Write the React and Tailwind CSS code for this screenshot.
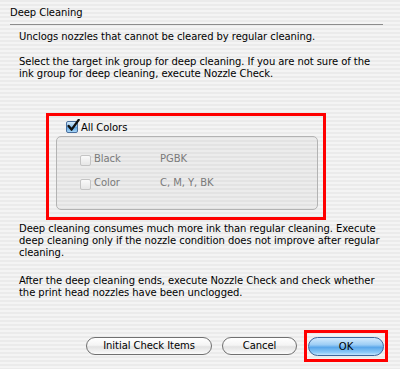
const stripes =
  'bg-[repeating-linear-gradient(to_bottom,#ebebeb_0px,#ebebeb_2px,#f4f4f4_2px,#f4f4f4_4px)]'

function AquaCheck() {
  return (
    <span className="relative flex h-[12px] w-[12px] shrink-0 items-center justify-center rounded-[2px] border border-[#4a6f9e] bg-[linear-gradient(to_bottom,#d6ebfb_0%,#8fc3ee_45%,#5ea6e4_55%,#a8d6f7_100%)]">
      <svg width="13" height="13" viewBox="0 0 12 12" className="absolute -top-[3px] left-[0px]">
        <path d="M1.5 6.5 L4.2 9.8 L10.8 0.8" fill="none" stroke="#111" strokeWidth="2.2" strokeLinecap="round" strokeLinejoin="round" />
      </svg>
    </span>
  )
}

function DimCheck() {
  return (
    <span className="mt-[2px] h-[11px] w-[11px] shrink-0 rounded-[2px] border border-[#c4c4c4] bg-[linear-gradient(to_bottom,#fafafa,#e6e6e6)]" />
  )
}

function Button({ children, className }) {
  return (
    <div
      className={
        'flex h-[18px] items-center justify-center rounded-full border border-[#707070] bg-[linear-gradient(to_bottom,#ffffff_0%,#f4f4f4_45%,#e2e2e2_55%,#fbfbfb_100%)] leading-[12px] text-black ' +
        className
      }
    >
      {children}
    </div>
  )
}

export default function App() {
  return (
    <div
      className={`h-[369px] w-[400px] overflow-hidden ${stripes} font-['DejaVu_Sans',Verdana,sans-serif] text-[10px] leading-[12px] tracking-[-0.06px] text-black`}
    >
      <div className="pl-[10px] pt-[7px]">Deep Cleaning</div>
      <div className="ml-[10px] mt-[5px] h-px w-[373px] bg-[#8c8c8c]" />

      <div className="pl-[19px]">
        <p className="mt-[6px]">Unclogs nozzles that cannot be cleared by regular cleaning.</p>
        <p className="mt-[13px] whitespace-nowrap">
          Select the target ink group for deep cleaning. If you are not sure of the
          <br />
          ink group for deep cleaning, execute Nozzle Check.
        </p>
      </div>

      <div className="ml-[46px] mt-[33px] h-[107px] w-[280px] border-[3px] border-[#ff0000]">
        <div className="ml-[17px] mt-[5px] flex items-start gap-[3px]">
          <AquaCheck />
          <span className="pt-px">All Colors</span>
        </div>
        <div className="ml-[7px] mt-[2px] h-[74px] w-[262px] rounded-[5px] border border-[#b3b3b3] bg-[#00000008] text-[#7a7a7a]">
          <div className="ml-[23px] mt-[16px] flex items-start">
            <DimCheck />
            <span className="ml-[3px] w-[66px]">Black</span>
            <span>PGBK</span>
          </div>
          <div className="ml-[23px] mt-[11px] flex items-start">
            <DimCheck />
            <span className="ml-[3px] w-[66px]">Color</span>
            <span>C, M, Y, BK</span>
          </div>
        </div>
      </div>

      <div className="whitespace-nowrap pl-[19px]">
        <p className="mt-[3px]">
          Deep cleaning consumes much more ink than regular cleaning. Execute
          <br />
          deep cleaning only if the nozzle condition does not improve after regular
          <br />
          cleaning.
        </p>
        <p className="mt-[16px]">
          After the deep cleaning ends, execute Nozzle Check and check whether
          <br />
          the print head nozzles have been unclogged.
        </p>
      </div>

      <div className="mt-[31px] flex items-center justify-end pr-[12px]">
        <Button className="w-[126px]">Initial Check Items</Button>
        <Button className="ml-[10px] w-[75px]">Cancel</Button>
        <div className="ml-[7px] h-[32px] w-[84px] border-[3px] border-[#ff0000] pl-px pt-[4px]">
          <div className="flex h-[19px] w-[76px] items-center justify-center rounded-full border border-[#3b679e] bg-[linear-gradient(to_bottom,#d3ebfd_0%,#9ccdf5_40%,#5aa7ea_55%,#8ccaf7_85%,#c3e5fc_100%)] leading-[12px] text-black">
            OK
          </div>
        </div>
      </div>
    </div>
  )
}
